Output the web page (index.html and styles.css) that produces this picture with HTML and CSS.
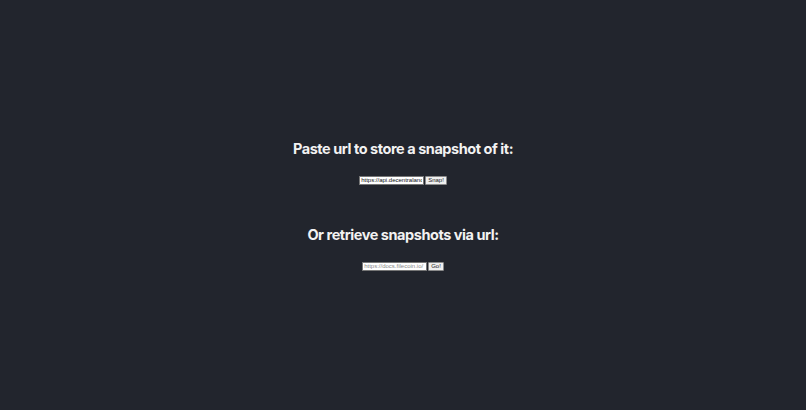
FILE: index.html
```html
<!DOCTYPE html>
<html>
<head>
<meta charset="utf-8">
<link rel="stylesheet" href="styles.css">
</head>
<body>
<main class="page">
  <section class="block">
    <h2 class="title">Paste url to store a snapshot of it:</h2>
    <form class="row">
      <input class="field" type="text" value="https://api.decentraland.org/v1/parcels">
      <button class="btn" type="button">Snap!</button>
    </form>
  </section>
  <section class="block">
    <h2 class="title">Or retrieve snapshots via url:</h2>
    <form class="row">
      <input class="field field-2" type="text" placeholder="https://docs.filecoin.io/">
      <button class="btn" type="button">Go!</button>
    </form>
  </section>
</main>
</body>
</html>
```

FILE: styles.css
```css
html, body {
  margin: 0;
  padding: 0;
  height: 100%;
  background: #22252d;
}
.page {
  height: 100%;
  display: flex;
  flex-direction: column;
  align-items: center;
  justify-content: center;
  gap: 41px;
  font-family: Inter, "Liberation Sans", sans-serif;
}
.block {
  display: flex;
  flex-direction: column;
  align-items: center;
  gap: 18px;
}
.title {
  margin: 0;
  color: #f2f2f2;
  font-size: 14.5px;
  letter-spacing: -0.45px;
  font-weight: 700;
  line-height: 18px;
}
.row {
  display: flex;
  align-items: center;
  gap: 1px;
  margin: 0;
}
.field {
  box-sizing: border-box;
  width: 65px;
  height: 9px;
  padding: 0 1px;
  border: 1px solid #767676;
  background: #ffffff;
  color: #111;
  font-family: "Liberation Sans", sans-serif;
  font-size: 6px;
  outline: none;
}
.field::placeholder {
  color: #8a8a8a;
}
.btn {
  box-sizing: border-box;
  height: 9px;
  padding: 0 2px;
  border: 1px solid #8a8a8a;
  border-radius: 1px;
  background: #efefef;
  color: #222;
  font-family: "Liberation Sans", sans-serif;
  font-size: 6px;
  line-height: 7px;
}
```
